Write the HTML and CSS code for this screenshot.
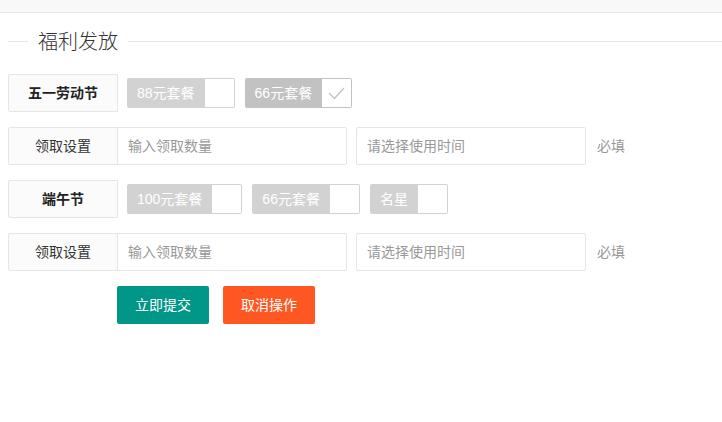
FILE: index.html
```html
<!DOCTYPE html>
<html lang="zh-CN">
<head>
    <meta charset="UTF-8">
    <title>福利发放</title>
    <link rel="stylesheet" href="styles.css">
</head>
<body>
    <div class="topbar"></div>

    <div class="page">
        <div class="field-title"><span>福利发放</span></div>

        <form class="form-pane">
            <div class="form-item">
                <label class="form-label strong">五一劳动节</label>
                <div class="check-group">
                    <div class="checkbox"><span>88元套餐</span><i></i></div>
                    <div class="checkbox checked"><span>66元套餐</span><i><svg viewBox="0 0 30 28" width="30" height="28"><polyline points="7,14 12.5,19.5 22,9" /></svg></i></div>
                </div>
            </div>

            <div class="form-item">
                <label class="form-label">领取设置</label>
                <input class="input first" type="text" placeholder="输入领取数量">
                <input class="input" type="text" placeholder="请选择使用时间">
                <span class="aux">必填</span>
            </div>

            <div class="form-item">
                <label class="form-label strong">端午节</label>
                <div class="check-group">
                    <div class="checkbox"><span>100元套餐</span><i></i></div>
                    <div class="checkbox"><span>66元套餐</span><i></i></div>
                    <div class="checkbox"><span>名星</span><i></i></div>
                </div>
            </div>

            <div class="form-item">
                <label class="form-label">领取设置</label>
                <input class="input first" type="text" placeholder="输入领取数量">
                <input class="input" type="text" placeholder="请选择使用时间">
                <span class="aux">必填</span>
            </div>

            <div class="form-item actions">
                <button type="button" class="btn">立即提交</button>
                <button type="button" class="btn btn-danger">取消操作</button>
            </div>
        </form>
    </div>
</body>
</html>
```

FILE: styles.css
```css
* {
    box-sizing: border-box;
}

body {
    margin: 0;
    background: #fff;
    font-family: "Liberation Sans", "Noto Sans CJK SC", sans-serif;
    font-size: 14px;
    color: #333;
}

.topbar {
    height: 13px;
    background-color: #f8f8f8;
    border-bottom: 1px solid #e8e8e8;
}

.page {
    padding-left: 8px;
}

/* fieldset style title */
.field-title {
    display: flex;
    align-items: center;
    height: 29px;
    margin-top: 14px;
    margin-bottom: 18px;
}

.field-title::before,
.field-title::after {
    content: "";
    height: 1px;
    background-color: #e6e6e6;
}

.field-title::before {
    width: 20px;
}

.field-title::after {
    flex: 1;
}

.field-title span {
    padding: 2px 10px 0;
    font-size: 20px;
    font-weight: 300;
    line-height: 29px;
    color: #333;
}

.form-item {
    display: flex;
    align-items: flex-start;
    height: 38px;
    margin-bottom: 15px;
}

.form-label {
    width: 110px;
    height: 38px;
    padding: 0 15px;
    line-height: 36px;
    text-align: center;
    background-color: #fbfbfb;
    border: 1px solid #e6e6e6;
    border-radius: 2px 0 0 2px;
    color: #333;
}

.form-label.strong {
    font-weight: bold;
    color: #222;
}

.check-group {
    display: flex;
    margin-left: 9px;
    margin-top: 4px;
}

.checkbox {
    display: flex;
    height: 30px;
    margin-right: 10px;
    cursor: pointer;
}

.checkbox span {
    padding: 0 10px;
    line-height: 30px;
    background-color: #d2d2d2;
    color: #fff;
    border-radius: 2px 0 0 2px;
    white-space: nowrap;
}

.checkbox i {
    display: block;
    width: 30px;
    height: 30px;
    border: 1px solid #d2d2d2;
    border-left: none;
    border-radius: 0 2px 2px 0;
    background: #fff;
}

.checkbox.checked span {
    background-color: #c2c2c2;
}

.checkbox.checked i {
    border-color: #c2c2c2;
}

.checkbox svg {
    display: block;
    fill: none;
    stroke: #c2c2c2;
    stroke-width: 1.3;
}

.input {
    width: 230px;
    height: 38px;
    margin: 0 9px 0 0;
    padding: 0 10px;
    font-family: inherit;
    font-size: 14px;
    color: #333;
    border: 1px solid #e6e6e6;
    border-radius: 2px;
    background: #fff;
    outline: none;
}

.input.first {
    margin-left: -1px;
    border-radius: 0 2px 2px 0;
}

.input::placeholder {
    color: #999;
}

.aux {
    margin-left: 2px;
    line-height: 38px;
    color: #999;
}

.actions {
    padding-left: 109px;
}

.btn {
    height: 38px;
    padding: 0 18px;
    font-family: inherit;
    font-size: 14px;
    line-height: 38px;
    color: #fff;
    background-color: #009688;
    border: none;
    border-radius: 2px;
    cursor: pointer;
}

.btn + .btn {
    margin-left: 14px;
}

.btn-danger {
    background-color: #ff5722;
}
```
